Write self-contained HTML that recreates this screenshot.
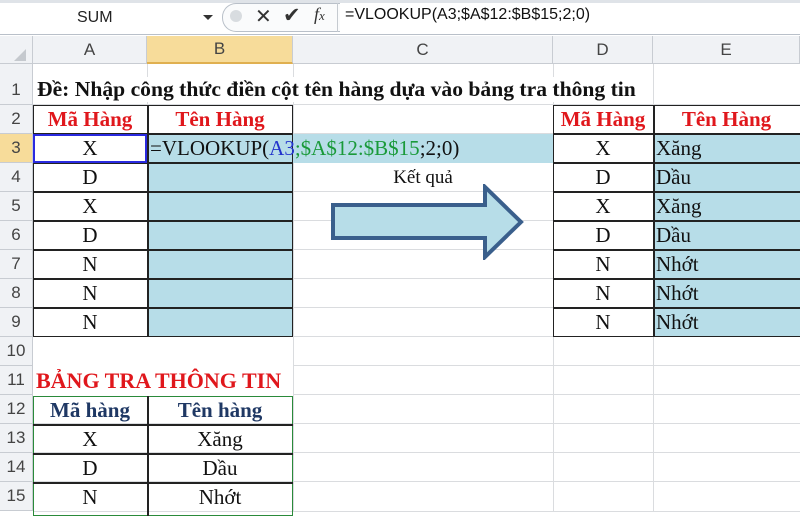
<!DOCTYPE html>
<html><head><meta charset="utf-8"><style>
*{margin:0;padding:0;box-sizing:border-box}
body{width:800px;height:512px;overflow:hidden;background:#fff;position:relative;font-family:"Liberation Serif",serif}
.a{position:absolute}
.hd{position:absolute;background:#f0f2f5;color:#444;font-family:"Liberation Sans",sans-serif;font-size:17px;display:flex;align-items:center;justify-content:center;border-right:1px solid #c8ccd2;border-bottom:1px solid #c8ccd2}
.gl{position:absolute;background:#dadcdf}
.c{position:absolute;display:flex;align-items:center;justify-content:center;font-size:21px;color:#111}
.bx{position:absolute;border:1.5px solid #222}
.blue{background:#b7dde8}
.red{color:#e0171c;font-weight:bold}
.l{justify-content:flex-start;padding-left:3px}
</style></head><body>
<div class="a" style="left:0;top:0;width:800px;height:35px;background:#fff;border-bottom:1px solid #b9c0c9"></div>
<div class="a" style="left:0;top:0;width:800px;height:3px;background:#dfe3e8"></div>
<div class="a" style="left:0;top:5px;width:220px;height:26px;font-family:'Liberation Sans',sans-serif;font-size:16px;color:#222;padding-left:77px;line-height:26px">SUM</div>
<div class="a" style="left:203px;top:15px;width:0;height:0;border-left:5px solid transparent;border-right:5px solid transparent;border-top:5px solid #333"></div>
<div class="a" style="left:222px;top:3px;width:118px;height:29px;border:1px solid #b9c0c9;border-radius:14px 0 0 14px;border-right:none;background:#fafbfc"></div>
<div class="a" style="left:230px;top:10px;width:12px;height:12px;border-radius:6px;background:#d8dce0"></div>
<div class="a" style="left:255px;top:4px;font-family:'Liberation Sans',sans-serif;font-size:20px;color:#333">✕</div>
<div class="a" style="left:283px;top:3px;font-size:21px;color:#333">✔</div>
<div class="a" style="left:314px;top:4px;font-size:18px;font-style:italic;color:#333">f<span style="font-size:13px">x</span></div>
<div class="a" style="left:337px;top:3px;width:1px;height:29px;background:#c5cad0"></div>
<div class="a" style="left:345px;top:6px;font-family:'Liberation Sans',sans-serif;font-size:16px;color:#111">=VLOOKUP(A3;$A$12:$B$15;2;0)</div>
<div class="hd" style="left:0;top:36px;width:33px;height:28px"><div style="width:0;height:0;border-left:12px solid transparent;border-bottom:12px solid #c5c9ce;margin:10px 0 0 8px"></div></div>
<div class="hd" style="left:33px;top:36px;width:114px;height:28px">A</div>
<div class="hd" style="left:147px;top:36px;width:146px;height:28px;background:#f7dc9a;border-bottom:2px solid #e0b050">B</div>
<div class="hd" style="left:293px;top:36px;width:260px;height:28px">C</div>
<div class="hd" style="left:553px;top:36px;width:100px;height:28px">D</div>
<div class="hd" style="left:653px;top:36px;width:147px;height:28px">E</div>
<div class="hd" style="left:0;top:64px;width:33px;height:41px;padding-top:12px">1</div>
<div id="rh"></div>
<script>
var s='';for(var r=2;r<=15;r++){var t=105+29*(r-2);s+='<div class="hd" style="left:0;top:'+t+'px;width:33px;height:29px;'+(r==3?'background:#f7dc9a':'')+'">'+r+'</div>';s+='<div class="gl" style="left:33px;top:'+(t-1)+'px;width:767px;height:1px"></div>';}
s+='<div class="gl" style="left:33px;top:511px;width:767px;height:1px"></div>';
document.getElementById('rh').innerHTML=s;
</script>
<div class="gl" style="left:293px;top:64px;width:1px;height:448px"></div>
<div class="gl" style="left:553px;top:64px;width:1px;height:448px"></div>
<div class="gl" style="left:653px;top:64px;width:1px;height:448px"></div>
<div class="gl" style="left:147px;top:64px;width:1px;height:41px"></div>
<div class="a" style="left:33px;top:335px;width:260px;height:60px;background:#fff"></div>
<div class="a" style="left:37px;top:77px;font-size:21.6px;font-weight:bold;color:#111;white-space:nowrap;background:#fff">Đề: Nhập công thức điền cột tên hàng dựa vào bảng tra thông tin</div>
<div class="a blue" style="left:147px;top:134px;width:146px;height:203px"></div>
<div class="a blue" style="left:293px;top:134px;width:260px;height:29px"></div>
<div class="bx" style="left:33px;top:105px;width:260px;height:232px"></div>
<div class="a" style="left:147px;top:105px;width:1.5px;height:232px;background:#222"></div>
<div class="a blue" style="left:653px;top:134px;width:147px;height:203px"></div>
<div class="bx" style="left:553px;top:105px;width:260px;height:232px"></div>
<div class="a" style="left:653px;top:105px;width:1.5px;height:232px;background:#222"></div>
<div class="c" style="left:293px;top:163px;width:260px;height:29px;font-size:19px">Kết quả</div>
<svg class="a" style="left:330px;top:184px" width="196" height="76"><path d="M3 21 H155 V3 L191 38 L155 73 V54 H3 Z" fill="#b7dde8" stroke="#3a5f8c" stroke-width="4"/></svg>
<div class="c red" style="left:36px;top:366px;width:260px;height:29px;justify-content:flex-start;font-size:22px;white-space:nowrap">BẢNG TRA THÔNG TIN</div>
<div class="a" style="left:33px;top:396px;width:260px;height:120px;border:1.5px solid #2a8a3a"></div>
<div class="a" style="left:147px;top:396px;width:1.5px;height:120px;background:#222"></div>
<div id="lt"></div>
<div class="a" style="left:33px;top:134px;width:114px;height:29px;border:2px solid #2a2ae0"></div>
<div class="c" style="left:147px;top:134px;width:400px;height:29px;justify-content:flex-start;padding-left:3px;white-space:nowrap">=VLOOKUP(<span style="color:#2233cc">A3</span><span style="color:#1a9a3a">;$A$12:$B$15</span>;2;0)</div>
<script>
var L=['X','D','X','D','N','N','N'],R=['Xăng','Dầu','Xăng','Dầu','Nhớt','Nhớt','Nhớt'];
var s='<div class="c red" style="left:33px;top:105px;width:114px;height:29px">Mã Hàng</div><div class="c red" style="left:147px;top:105px;width:146px;height:29px">Tên Hàng</div>';
s+='<div class="c red" style="left:553px;top:105px;width:100px;height:29px">Mã Hàng</div><div class="c red" style="left:653px;top:105px;width:147px;height:29px">Tên Hàng</div>';
for(var i=0;i<7;i++){var t=134+29*i;
 s+='<div class="a" style="left:33px;top:'+(t-1)+'px;width:260px;height:1.5px;background:#222"></div>';
 s+='<div class="a" style="left:553px;top:'+(t-1)+'px;width:247px;height:1.5px;background:#222"></div>';
 s+='<div class="c" style="left:33px;top:'+t+'px;width:114px;height:29px">'+L[i]+'</div>';
 s+='<div class="c" style="left:553px;top:'+t+'px;width:100px;height:29px">'+L[i]+'</div>';
 s+='<div class="c l" style="left:653px;top:'+t+'px;width:147px;height:29px">'+R[i]+'</div>';}
var B=[['Mã hàng','Tên hàng'],['X','Xăng'],['D','Dầu'],['N','Nhớt']];
for(var i=0;i<4;i++){var t=396+29*i;
 if(i>0)s+='<div class="a" style="left:33px;top:'+(t-1)+'px;width:260px;height:1.5px;background:#222"></div>';
 var st=i==0?'font-weight:bold;color:#1f3864;':'';
 s+='<div class="c" style="left:33px;top:'+t+'px;width:114px;height:29px;'+st+'">'+B[i][0]+'</div>';
 s+='<div class="c" style="left:147px;top:'+t+'px;width:146px;height:29px;'+st+'">'+B[i][1]+'</div>';}
document.getElementById('lt').innerHTML=s;
</script>
</body></html>
